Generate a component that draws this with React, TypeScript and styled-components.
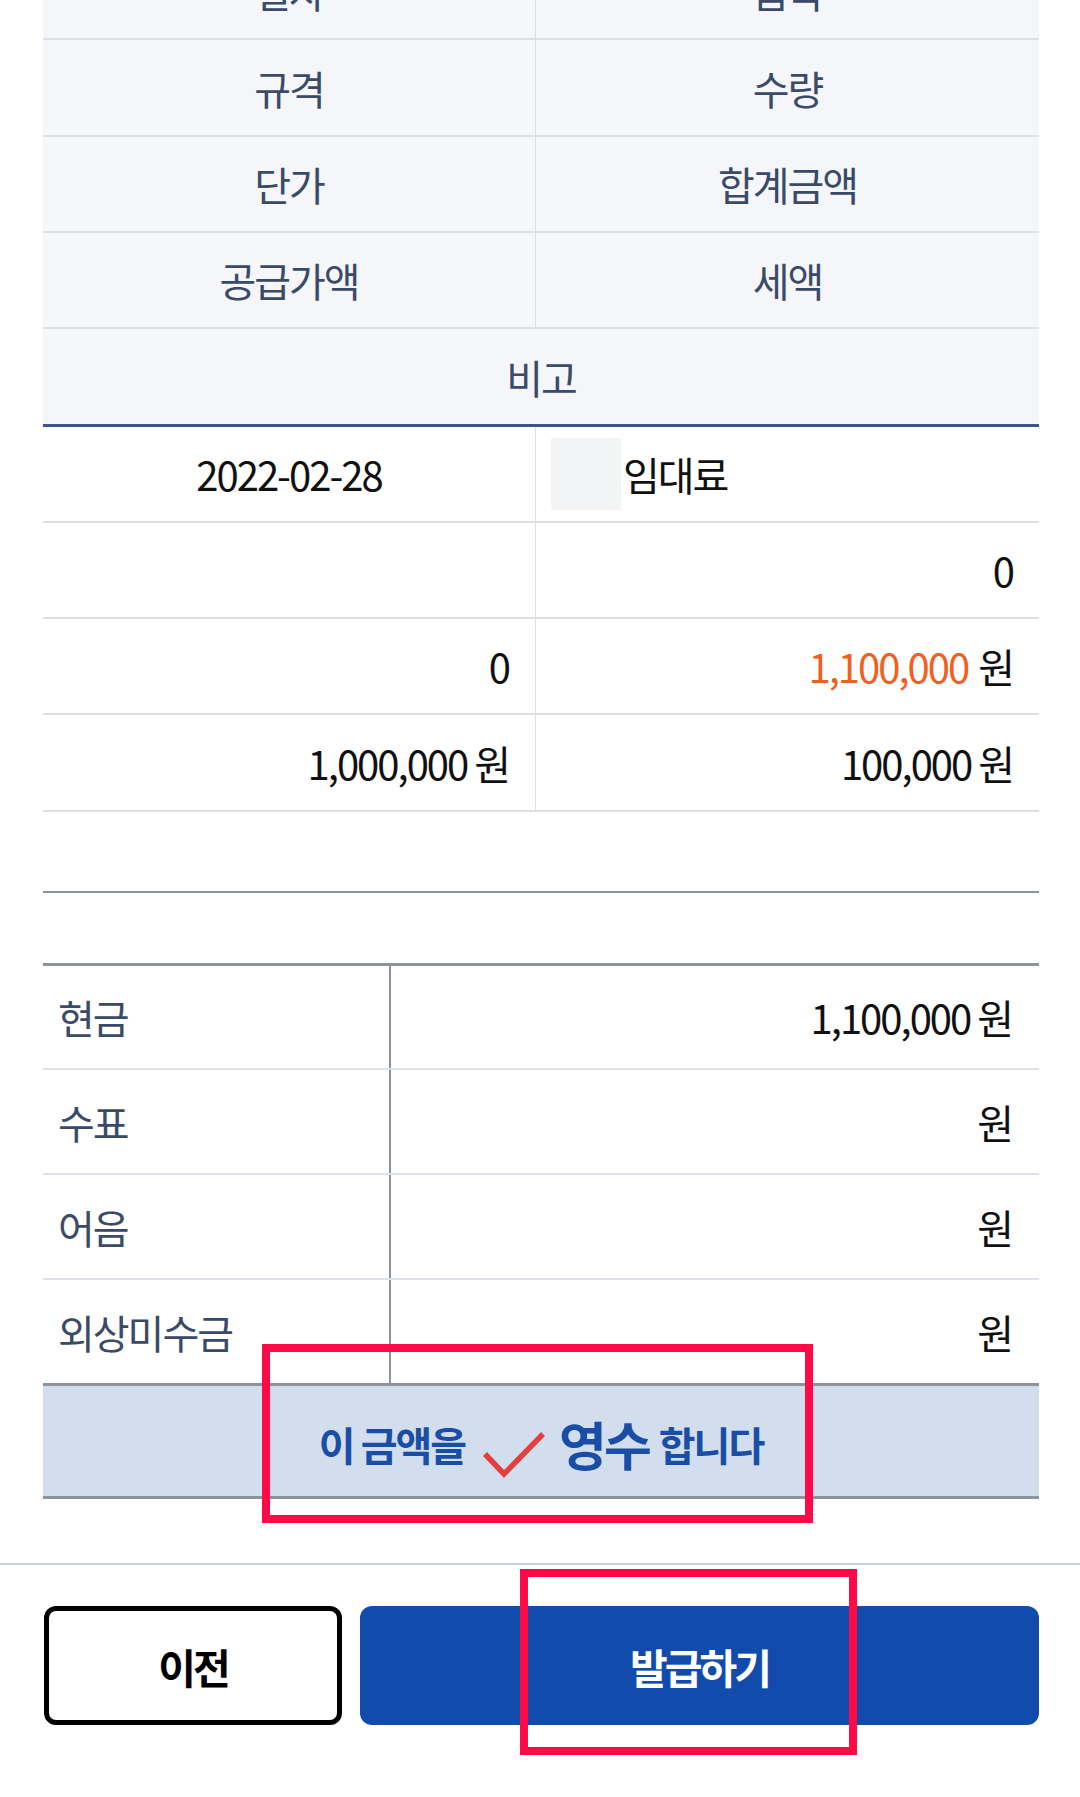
import styled, { createGlobalStyle } from "styled-components";

const GlobalStyle = createGlobalStyle`
  html, body {
    margin: 0;
    padding: 0;
    background: #ffffff;
  }
  body {
    font-family: "Noto Sans CJK KR", "Noto Sans", sans-serif;
  }
`;

const headRows = [
  { a: "일자", b: "품목", h: 96 },
  { a: "규격", b: "수량", h: 97 },
  { a: "단가", b: "합계금액", h: 96 },
  { a: "공급가액", b: "세액", h: 96 },
];

const payRows = [
  { label: "현금", value: "1,100,000 원", h: 104 },
  { label: "수표", value: "원", h: 105 },
  { label: "어음", value: "원", h: 105 },
  { label: "외상미수금", value: "원", h: 103 },
];

const Page = styled.div`
  position: relative;
  width: 1080px;
  height: 1797px;
  overflow: hidden;
  background: #fff;
`;

const Sheet = styled.div`
  width: 996px;
  margin: -56px 0 0 43px;
`;

const Row = styled.div<{ $bg?: string; $line?: string; $lineW?: number; $h?: number }>`
  display: grid;
  grid-template-columns: 493px 1fr;
  height: ${(p) => p.$h ?? 96}px;
  box-sizing: border-box;
  background: ${(p) => p.$bg ?? "#fff"};
  border-bottom: ${(p) => p.$lineW ?? 2}px solid ${(p) => p.$line ?? "#dcdfe5"};
`;

const Cell = styled.div<{ $align?: string; $head?: boolean; $divider?: boolean; $span?: boolean }>`
  display: flex;
  align-items: center;
  justify-content: ${(p) =>
    p.$align === "right" ? "flex-end" : p.$align === "left" ? "flex-start" : "center"};
  padding: 0 ${(p) => (p.$align === "right" ? "26px" : "0")} 0
    ${(p) => (p.$align === "left" ? "15px" : "0")};
  grid-column: ${(p) => (p.$span ? "1 / 3" : "auto")};
  border-right: ${(p) => (p.$divider ? "1px solid #dcdfe5" : "none")};
  font-size: 40px;
  letter-spacing: -2px;
  color: ${(p) => (p.$head ? "#3b4a66" : "#111")};
  white-space: nowrap;
`;

const Thumb = styled.div`
  width: 70px;
  height: 72px;
  background: #f3f4f6;
  margin-right: 2px;
`;

const Orange = styled.span`
  color: #f0601e;
  margin-right: 10px;
`;

const Blank = styled.div`
  height: 81px;
  box-sizing: border-box;
  border-bottom: 2px solid #8c939b;
`;

const PayTable = styled.div`
  margin-top: 70px;
  border-top: 3px solid #8c939b;
`;

const PayRow = styled.div<{ $last?: boolean; $h: number }>`
  display: grid;
  grid-template-columns: 348px 1fr;
  height: ${(p) => p.$h}px;
  box-sizing: border-box;
  border-bottom: ${(p) => (p.$last ? "none" : "2px solid #dde1e8")};
`;

const PayLabel = styled.div`
  display: flex;
  align-items: center;
  padding-left: 15px;
  border-right: 2px solid #8c939b;
  font-size: 40px;
  letter-spacing: -2px;
  color: #3b4a66;
`;

const PayValue = styled.div`
  display: flex;
  align-items: center;
  justify-content: flex-end;
  padding-right: 27px;
  font-size: 40px;
  letter-spacing: -2px;
  color: #111;
`;

const ReceiptBar = styled.div`
  height: 116px;
  box-sizing: border-box;
  background: #d2deee;
  border-top: 3px solid #8c939b;
  border-bottom: 3px solid #8c939b;
  display: flex;
  align-items: center;
  justify-content: center;
  padding-top: 6px;
  color: #1a4ea6;
  font-weight: 700;
`;

const Say = styled.span<{ $big?: boolean; $gap?: number }>`
  font-size: ${(p) => (p.$big ? 52 : 40)}px;
  letter-spacing: ${(p) => (p.$big ? -3 : -2)}px;
  line-height: 1;
  margin-left: ${(p) => p.$gap ?? 0}px;
`;

const Check = styled.svg`
  width: 62px;
  height: 46px;
  margin: 22px 14px 0 18px;
`;

const Divider = styled.div`
  height: 2px;
  background: #c5ccd5;
  margin-top: 64px;
`;

const Buttons = styled.div`
  display: flex;
  gap: 18px;
  padding: 41px 41px 0 44px;
`;

const Button = styled.button<{ $primary?: boolean }>`
  height: 119px;
  box-sizing: border-box;
  border-radius: 12px;
  font-family: "Noto Sans CJK KR", sans-serif;
  font-size: 41px;
  font-weight: 700;
  letter-spacing: -3px;
  cursor: pointer;
  ${(p) =>
    p.$primary
      ? `flex: 1; background: #114cad; color: #fff; border: none;`
      : `width: 298px; background: #fff; color: #000; border: 5px solid #000;`}
`;

const Mark = styled.div<{ $x: number; $y: number; $w: number; $h: number }>`
  position: absolute;
  left: ${(p) => p.$x}px;
  top: ${(p) => p.$y}px;
  width: ${(p) => p.$w}px;
  height: ${(p) => p.$h}px;
  box-sizing: border-box;
  border: 8px solid #ff0a47;
  pointer-events: none;
`;

export default function App() {
  return (
    <Page>
      <GlobalStyle />
      <Sheet>
        {headRows.map((r) => (
          <Row key={r.a} $bg="#f4f6fa" $h={r.h}>
            <Cell $head $divider>{r.a}</Cell>
            <Cell $head>{r.b}</Cell>
          </Row>
        ))}
        <Row $bg="#f4f6fa" $line="#3a5590" $lineW={3} $h={98}>
          <Cell $head $span>비고</Cell>
        </Row>
        <Row>
          <Cell $divider>2022-02-28</Cell>
          <Cell $align="left">
            <Thumb />
            임대료
          </Cell>
        </Row>
        <Row>
          <Cell $divider $align="right"></Cell>
          <Cell $align="right">0</Cell>
        </Row>
        <Row>
          <Cell $divider $align="right">0</Cell>
          <Cell $align="right">
            <Orange>1,100,000</Orange>원
          </Cell>
        </Row>
        <Row $h={97}>
          <Cell $divider $align="right">1,000,000 원</Cell>
          <Cell $align="right">100,000 원</Cell>
        </Row>
        <Blank />
        <PayTable>
          {payRows.map((r, i) => (
            <PayRow key={r.label} $h={r.h} $last={i === payRows.length - 1}>
              <PayLabel>{r.label}</PayLabel>
              <PayValue>{r.value}</PayValue>
            </PayRow>
          ))}
        </PayTable>
        <ReceiptBar>
          <Say>이 금액을</Say>
          <Check viewBox="0 0 62 46">
            <path d="M2 22 L21 42 L60 2" fill="none" stroke="#e53e3e" strokeWidth="5.5" />
          </Check>
          <Say $big>영수</Say>
          <Say $gap={10}>합니다</Say>
        </ReceiptBar>
      </Sheet>
      <Divider />
      <Buttons>
        <Button>이전</Button>
        <Button $primary>발급하기</Button>
      </Buttons>
      <Mark $x={262} $y={1344} $w={551} $h={179} />
      <Mark $x={520} $y={1569} $w={337} $h={186} />
    </Page>
  );
}
